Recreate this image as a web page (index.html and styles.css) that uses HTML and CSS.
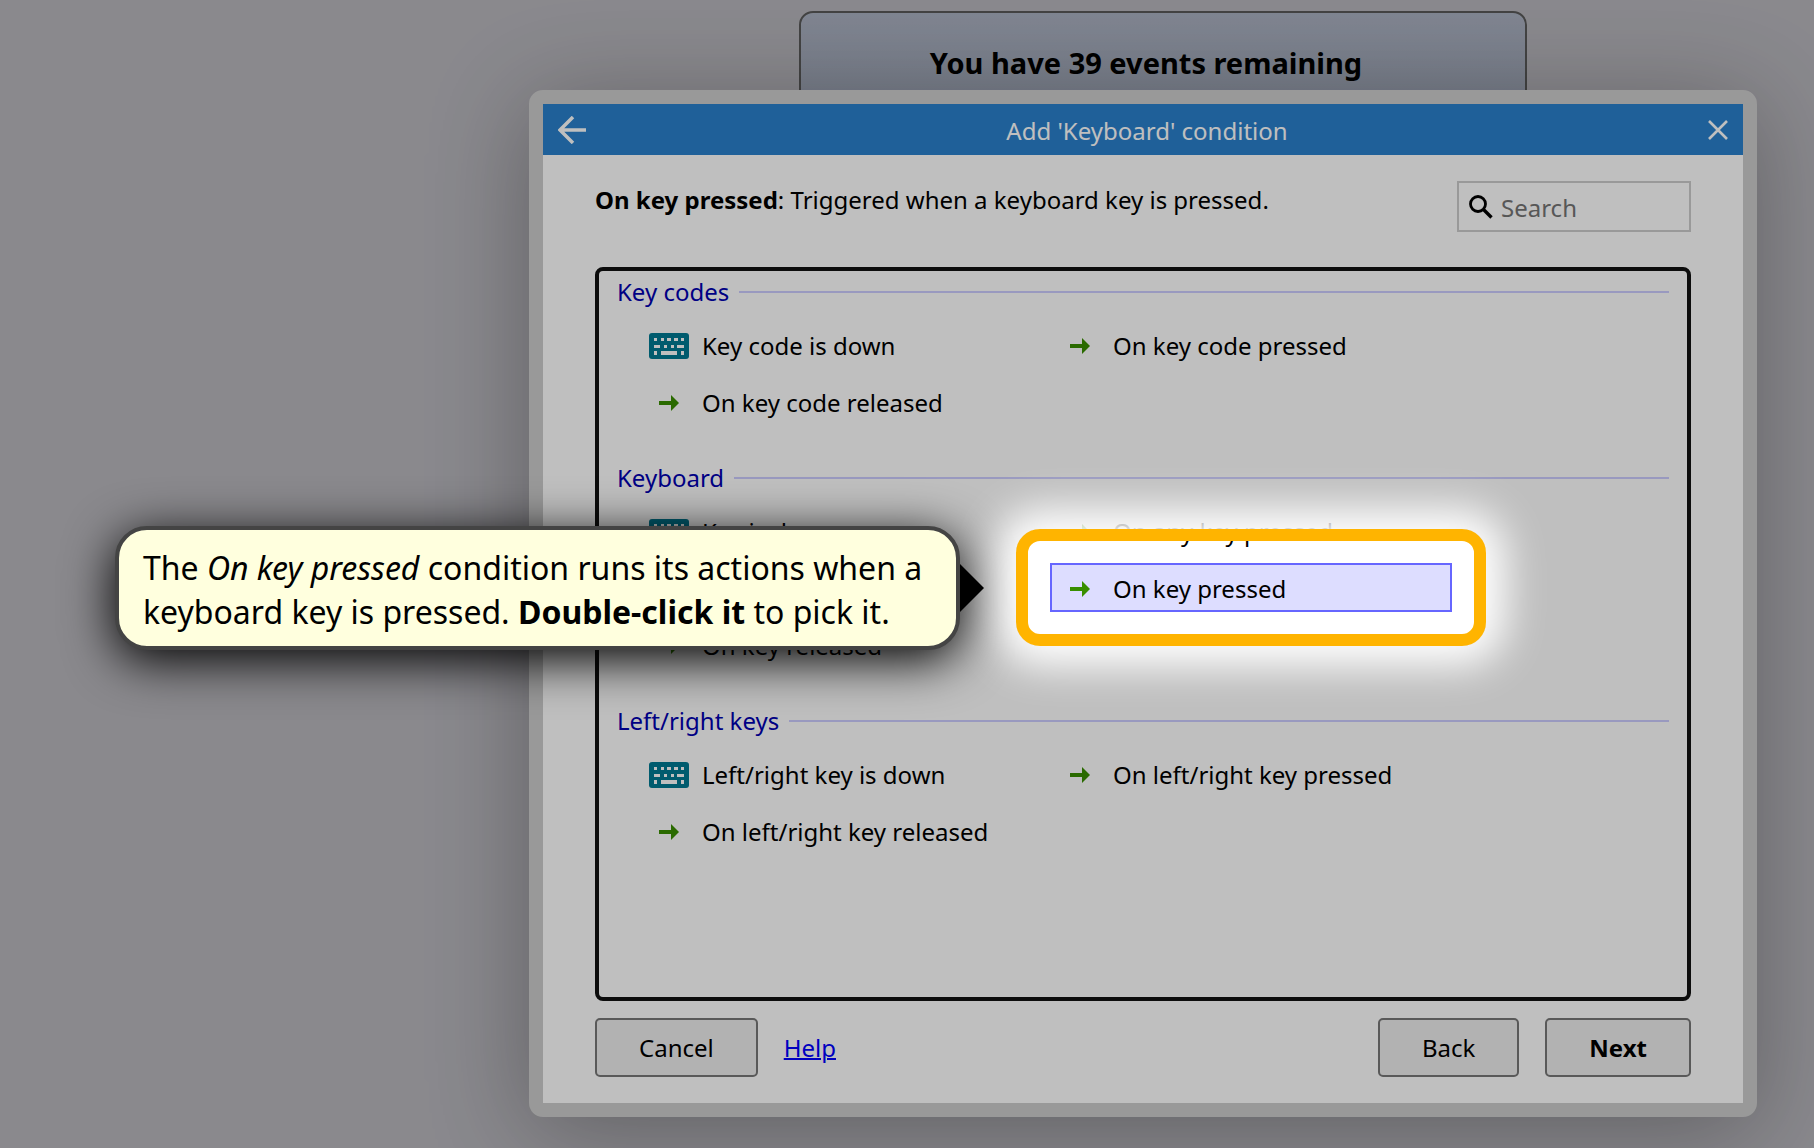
FILE: index.html
```html
<!DOCTYPE html>
<html lang="en">
<head>
    <meta charset="UTF-8">
    <meta name="viewport" content="width=device-width, initial-scale=1.0">
    <title>Add 'Keyboard' condition</title>
    <link rel="stylesheet" href="styles.css">
</head>
<body>
    <!-- Shared icons -->
    <svg class="icon-defs" aria-hidden="true">
        <symbol id="icon-keyboard" viewBox="0 0 40 26">
            <rect width="40" height="26" rx="3" fill="#007a93"/>
            <path fill="#fff" d="M5 5h3v3H5zM12 5h3v3h-3zM18 5h4v3h-4zM25 5h4v3h-4zM32 5h3v3h-3zM5 12h6v3H5zM15 12h3v3h-3zM22 12h3v3h-3zM28 12h7v3h-7zM5 18h3v4H5zM12 18h16v4H12zM32 18h3v4h-3z"/>
        </symbol>
        <symbol id="icon-arrow" viewBox="0 0 20 16">
            <path fill="#388e00" d="M0 6h12V0l8 8-8 8v-6H0z"/>
        </symbol>
    </svg>

    <!-- Event counter behind the dialog -->
    <main class="page">
        <section class="banner">
            <p>You have 39 events remaining</p>
        </section>
    </main>

    <!-- Dialog -->
    <div class="dialog-layer">
        <div class="dialog" role="dialog" aria-labelledby="dialogTitle">
            <header class="title-bar">
                <button type="button" class="title-btn" aria-label="Go back">
                    <svg width="28" height="28" viewBox="0 0 28 28"><path d="M15 1L2 14l13 13M2 14h26" fill="none" stroke="#fff" stroke-width="3.5"/></svg>
                </button>
                <h1 id="dialogTitle">Add 'Keyboard' condition</h1>
                <button type="button" class="title-btn" aria-label="Close">
                    <svg width="20" height="20" viewBox="0 0 20 20"><path d="M1 1l18 18M19 1L1 19" fill="none" stroke="#fff" stroke-width="2.6"/></svg>
                </button>
            </header>

            <div class="dialog-body">
                <div class="intro">
                    <p><b>On key pressed</b>: Triggered when a keyboard key is pressed.</p>
                    <label class="search">
                        <svg width="24" height="24" viewBox="0 0 24 24"><circle cx="9" cy="9" r="7.5" fill="none" stroke="#000" stroke-width="2.8"/><path d="M14.5 14.5l8 8" stroke="#000" stroke-width="3.4"/></svg>
                        <input type="search" placeholder="Search" aria-label="Search">
                    </label>
                </div>

                <div class="condition-list">
                    <section class="group">
                        <h2>Key codes</h2>
                        <ul>
                            <li><button type="button" class="item"><svg class="keyboard"><use href="#icon-keyboard"/></svg>Key code is down</button></li>
                            <li><button type="button" class="item"><svg class="arrow"><use href="#icon-arrow"/></svg>On key code pressed</button></li>
                            <li><button type="button" class="item"><svg class="arrow"><use href="#icon-arrow"/></svg>On key code released</button></li>
                        </ul>
                    </section>

                    <section class="group">
                        <h2>Keyboard</h2>
                        <ul>
                            <li><button type="button" class="item"><svg class="keyboard"><use href="#icon-keyboard"/></svg>Key is down</button></li>
                            <li><button type="button" class="item"><svg class="arrow"><use href="#icon-arrow"/></svg>On any key pressed</button></li>
                            <li><button type="button" class="item"><svg class="arrow"><use href="#icon-arrow"/></svg>On any key released</button></li>
                            <li class="tour-target">
                                <button type="button" class="item selected" aria-describedby="tourTip"><svg class="arrow"><use href="#icon-arrow"/></svg>On key pressed</button>
                                <div class="spotlight"></div>
                                <div class="tip" id="tourTip" role="tooltip">The <i>On key pressed</i> condition runs its actions when a keyboard key is pressed. <b>Double-click it</b> to pick it.</div>
                            </li>
                            <li><button type="button" class="item"><svg class="arrow"><use href="#icon-arrow"/></svg>On key released</button></li>
                        </ul>
                    </section>

                    <section class="group">
                        <h2>Left/right keys</h2>
                        <ul>
                            <li><button type="button" class="item"><svg class="keyboard"><use href="#icon-keyboard"/></svg>Left/right key is down</button></li>
                            <li><button type="button" class="item"><svg class="arrow"><use href="#icon-arrow"/></svg>On left/right key pressed</button></li>
                            <li><button type="button" class="item"><svg class="arrow"><use href="#icon-arrow"/></svg>On left/right key released</button></li>
                        </ul>
                    </section>
                </div>

                <footer class="actions">
                    <button type="button" class="btn">Cancel</button>
                    <a href="#">Help</a>
                    <button type="button" class="btn back">Back</button>
                    <button type="button" class="btn next">Next</button>
                </footer>
            </div>
        </div>
    </div>
</body>
</html>
```
FILE: styles.css
```css
* {
    box-sizing: border-box;
}

body {
    margin: 0;
    min-height: 100vh;
    background-color: #b8b7bd;
    color: #000;
    font-family: "Noto Sans", "Open Sans", sans-serif;
    font-size: 24px;
    line-height: 34px;
}

button, input {
    font: inherit;
    color: inherit;
}

h1, h2, p, ul {
    margin: 0;
    padding: 0;
    font-size: inherit;
    font-weight: normal;
}

ul {
    list-style: none;
}

.icon-defs {
    display: none;
}

/* Event counter */
.page {
    padding: 11px 287px 0 799px;
}

.banner {
    height: 160px;
    padding: 30px 34px 0 0;
    border: 2px solid #5a5a5a;
    border-radius: 14px;
    background: linear-gradient(#abb2c2, #98a0b0);
    font-size: 29px;
    line-height: 40px;
    text-align: center;
}

.banner p {
    font-weight: bold;
}

/* Dialog */
.dialog-layer {
    position: absolute;
    inset: 0;
    display: flex;
    padding: 90px 57px 31px 529px;
}

.dialog {
    flex: 1;
    display: flex;
    flex-direction: column;
    border: 14px solid #ccc;
    border-radius: 14px;
    background-color: #fff;
    box-shadow: 0 14px 100px rgba(0, 0, 0, 0.3);
}

.title-bar {
    display: flex;
    align-items: center;
    height: 51px;
    background-color: #2a80cc;
    color: #fff;
}

.title-bar h1 {
    flex: 1;
    padding-top: 2px;
    text-align: center;
}

.title-btn {
    display: flex;
    justify-content: center;
    align-items: center;
    width: 58px;
    height: 51px;
    padding: 0;
    border: none;
    background: none;
}

.title-btn:last-child {
    width: 50px;
}

.dialog-body {
    flex: 1;
    display: flex;
    flex-direction: column;
    padding: 26px 52px;
}

.intro {
    display: flex;
    justify-content: space-between;
    align-items: flex-start;
    margin-bottom: 35px;
}

.intro p {
    line-height: 38px;
}

.search {
    display: flex;
    align-items: center;
    gap: 8px;
    width: 234px;
    height: 51px;
    padding: 0 10px;
    border: 2px solid #ccc;
}

.search input {
    flex: 1;
    min-width: 0;
    padding: 2px 0 0;
    border: none;
    outline: none;
    background: none;
}

.search input::placeholder {
    color: #757575;
}

/* List of conditions */
.condition-list {
    flex: 1;
    padding: 4px 18px;
    border: 4px solid #101010;
    border-radius: 8px;
}

.group {
    margin-bottom: 35px;
}

.group h2 {
    display: flex;
    align-items: center;
    gap: 10px;
    color: #0000b0;
}

.group h2::after {
    content: '';
    flex: 1;
    height: 2px;
    background-color: #ccf;
}

.group ul {
    display: grid;
    grid-template-columns: repeat(auto-fill, 402px);
    gap: 8px 9px;
    padding: 11px 0 0 22px;
}

.item {
    display: flex;
    align-items: center;
    width: 100%;
    height: 49px;
    padding: 2px 8px 0;
    border: 2px solid transparent;
    background: none;
    text-align: left;
}

.item.selected {
    border-color: #66f;
    background-color: #ddf;
}

.keyboard {
    width: 40px;
    height: 26px;
    margin-right: 13px;
}

.arrow {
    width: 20px;
    height: 16px;
    margin: 0 23px 0 10px;
}

/* Guided tour */
.tour-target {
    position: relative;
    z-index: 1;
}

/* The big spread dims everything outside the frame */
.spotlight {
    position: absolute;
    inset: -34px;
    border: 12px solid #ffb400;
    border-radius: 24px;
    box-shadow: 0 0 40px 20px #fff, 0 0 0 9999px rgba(0, 0, 0, 0.25);
    pointer-events: none;
}

.tip {
    position: absolute;
    top: 50%;
    right: calc(100% + 90px);
    width: 845px;
    padding: 16px 24px 12px;
    transform: translateY(-50%);
    border: 4px solid #444;
    border-radius: 32px;
    background-color: #ffffde;
    box-shadow: 0 10px 50px #000;
    font-size: 32px;
    line-height: 44px;
}

.tip::after {
    content: '';
    position: absolute;
    top: 50%;
    left: calc(100% + 4px);
    transform: translateY(-50%);
    border: 24px solid transparent;
    border-left-color: #000;
    border-right-width: 0;
}

/* Bottom buttons */
.actions {
    display: flex;
    align-items: center;
    gap: 26px;
    margin-top: 17px;
}

.actions a {
    color: #00f;
    text-decoration-thickness: 2px;
}

.btn {
    height: 59px;
    padding: 0 42px;
    border: 2px solid #777;
    border-radius: 5px;
    background-color: #eee;
}

.back {
    margin-left: auto;
}

.next {
    font-weight: bold;
}
```
